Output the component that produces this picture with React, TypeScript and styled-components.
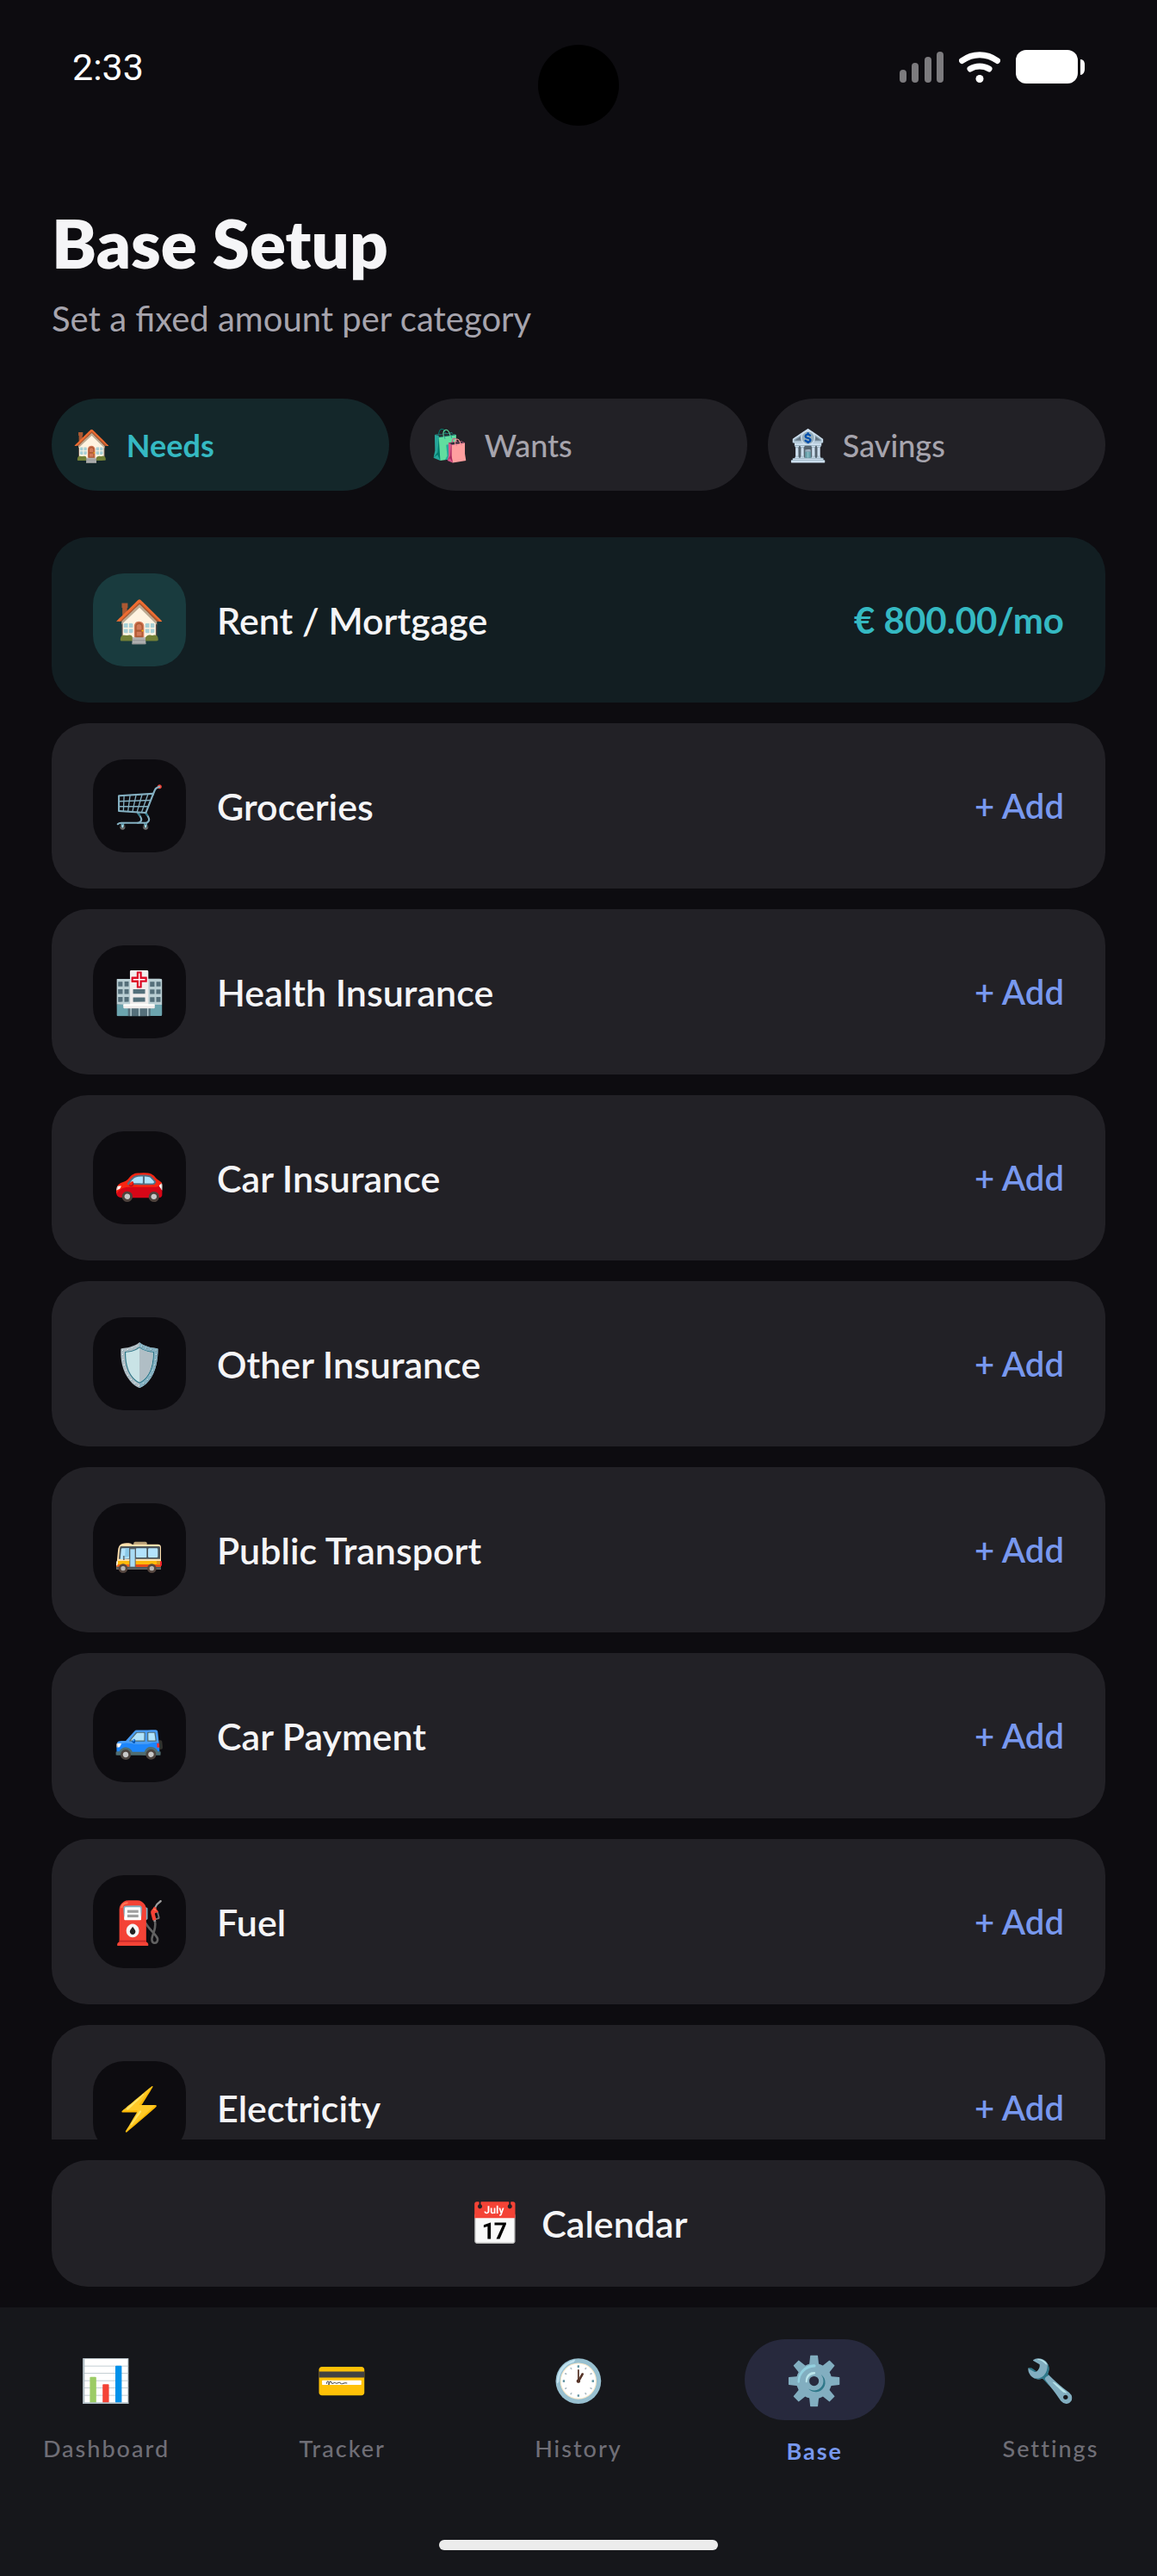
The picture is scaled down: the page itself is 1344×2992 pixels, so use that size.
import { useState } from 'react';
import styled, { createGlobalStyle } from 'styled-components';

type Category = {
  icon: React.ReactNode;
  name: string;
  amount?: string;
};

const BusIcon: React.FC = () => (
  <svg width="54" height="54" viewBox="105 129 162 162" aria-hidden="true">
    <rect x="166" y="182" width="46" height="14" rx="5" fill="#b8a077" />
    <path
      d="M126 189c10-3 20-2 30-1l4 3h90c8 0 11 4 11 11v76H106v-12l5-52c1-14 6-22 15-25z"
      fill="#ffe0ad"
    />
    <path d="M111 249h150v20H107z" fill="#fdb90b" />
    <path d="M107 261h154v9H106z" fill="#f2641c" />
    <path d="M106 269h155v9H106z" fill="#4f5a60" />
    <path d="M172 262h89v8h-89z" fill="#e64a19" />
    <path d="M122 198h131c4 0 5 2 5 5v39H114l3-34c1-7 2-10 5-10z" fill="#4a5459" />
    <path d="M126 205h24v36l-31 3 3-32c0-4 1-7 4-7z" fill="#b3e3fc" />
    <path d="M137 205h13v28l-15 4z" fill="#8bc9e8" />
    <rect x="174" y="205" width="37" height="32" rx="2" fill="#b3e3fc" />
    <rect x="216" y="205" width="34" height="32" rx="4" fill="#b3e3fc" />
    <rect x="151" y="205" width="22" height="66" fill="#5f6669" />
    <rect x="154" y="208" width="16" height="61" fill="#a9dcf5" />
    <path d="M129 231h5v15h-5z" fill="#66757c" />
    <path d="M246 250h13v3h-13zM246 256h13v3h-13z" fill="#b9772b" />
    <rect x="258" y="250" width="6" height="16" rx="2" fill="#f11f2d" />
    <path d="M106 250l5 1-2 14h-4z" fill="#fff7e6" />
    <g fill="#55463f">
      <circle cx="129" cy="275" r="16" />
      <circle cx="229" cy="275" r="16" />
    </g>
    <g fill="#b5b5b5">
      <circle cx="129" cy="275" r="8" />
      <circle cx="229" cy="275" r="8" />
    </g>
  </svg>
);

const tabs = [
  { icon: '🏠', name: 'Needs' },
  { icon: '🛍️', name: 'Wants' },
  { icon: '🏦', name: 'Savings' },
];

const categories: Category[] = [
  { icon: '🏠', name: 'Rent / Mortgage', amount: '€ 800.00/mo' },
  { icon: '🛒', name: 'Groceries' },
  { icon: '🏥', name: 'Health Insurance' },
  { icon: '🚗', name: 'Car Insurance' },
  { icon: '🛡️', name: 'Other Insurance' },
  { icon: <BusIcon />, name: 'Public Transport' },
  { icon: '🚙', name: 'Car Payment' },
  { icon: '⛽', name: 'Fuel' },
  { icon: '⚡', name: 'Electricity' },
];

const pages = [
  { icon: '📊', name: 'Dashboard' },
  { icon: '💳', name: 'Tracker' },
  { icon: '🕐', name: 'History' },
  { icon: '⚙️', name: 'Base' },
  { icon: '🔧', name: 'Settings' },
];

const StatusIcons: React.FC = () => (
  <Indicators>
    <svg width="51" height="36" viewBox="0 0 51 36" fill="#7c7b7e">
      <rect x="0" y="21" width="8" height="15" rx="4" />
      <rect x="14" y="13" width="8" height="23" rx="4" />
      <rect x="29" y="6" width="8" height="30" rx="4" />
      <rect x="43" y="0" width="8" height="36" rx="4" />
    </svg>
    <svg width="48" height="36" viewBox="0 0 48 36" fill="none">
      <g stroke="#fff" strokeWidth="7" strokeLinecap="round">
        <path d="M3.5 10.5C16 1.4 32 1.4 44.5 10.5" />
        <path d="M13 20C19.5 16 28.5 16 35 20" />
      </g>
      <circle cx="24" cy="31.5" r="4.5" fill="#fff" />
    </svg>
    <svg width="80" height="40" viewBox="0 0 80 40" fill="#fff">
      <rect width="72" height="39" rx="12" />
      <path d="M75 11c3 0 5 2 5 6v5c0 4-2 7-5 7z" />
    </svg>
  </Indicators>
);

const CategoryRow: React.FC<{ data: Category }> = ({ data }) => {
  const filled = Boolean(data.amount);
  return (
    <Row $filled={filled}>
      <RowIcon $filled={filled}>{data.icon}</RowIcon>
      <RowName>{data.name}</RowName>
      <RowAction type="button" $filled={filled}>
        {data.amount ?? '+ Add'}
      </RowAction>
    </Row>
  );
};

const App: React.FC = () => {
  const [tab, setTab] = useState('Needs');

  return (
    <Screen>
      <GlobalStyle />
      <StatusBar>
        <Clock>2:33</Clock>
        <Camera />
        <StatusIcons />
      </StatusBar>
      <Header>
        <Title>Base Setup</Title>
        <Subtitle>Set a fixed amount per category</Subtitle>
      </Header>
      <Tabs>
        {tabs.map(({ icon, name }) => (
          <Tab
            key={name}
            type="button"
            aria-pressed={tab === name}
            $active={tab === name}
            onClick={() => setTab(name)}
          >
            <TabIcon>{icon}</TabIcon>
            {name}
          </Tab>
        ))}
      </Tabs>
      <List>
        {categories.map((category) => (
          <CategoryRow key={category.name} data={category} />
        ))}
      </List>
      <CalendarButton type="button">
        <CalendarIcon>📅</CalendarIcon>
        Calendar
      </CalendarButton>
      <BottomBar>
        <Nav>
          {pages.map(({ icon, name }) => (
            <NavLink key={name} href={`#${name.toLowerCase()}`} $active={name === 'Base'}>
              <NavIcon $active={name === 'Base'}>{icon}</NavIcon>
              {name}
            </NavLink>
          ))}
        </Nav>
        <HomeIndicator />
      </BottomBar>
    </Screen>
  );
};

const GlobalStyle = createGlobalStyle`
  * {
    box-sizing: border-box;
  }
  body {
    margin: 0;
    background: #0d0c10;
  }
  button {
    border: 0;
    padding: 0;
    background: none;
    font-family: inherit;
    cursor: pointer;
  }
`;

const Screen = styled.main`
  display: flex;
  flex-direction: column;
  height: 100vh;
  overflow: hidden;
  background: #0d0c10;
  color: #f5f5f7;
  font-family: Lato, 'Noto Color Emoji', sans-serif;
`;

const StatusBar = styled.div`
  position: relative;
  display: flex;
  flex-shrink: 0;
  align-items: center;
  justify-content: space-between;
  height: 156px;
  padding: 0 84px;
`;

const Clock = styled.time`
  color: #fff;
  font-family: Roboto, sans-serif;
  font-size: 43px;
`;

const Camera = styled.div`
  position: absolute;
  top: 52px;
  left: 50%;
  width: 94px;
  height: 94px;
  margin-left: -47px;
  border-radius: 50%;
  background: #000;
`;

const Indicators = styled.div`
  display: flex;
  align-items: center;
  gap: 18px;
`;

const Header = styled.header`
  padding: 78px 60px 0;
`;

const Title = styled.h1`
  margin: 0;
  font-size: 78px;
  font-weight: 800;
  line-height: 96px;
`;

const Subtitle = styled.p`
  margin: 16px 0 0;
  color: #a6a4ad;
  font-size: 40px;
  line-height: 48px;
`;

const Tabs = styled.div`
  display: grid;
  grid-template-columns: repeat(3, 1fr);
  gap: 24px;
  padding: 69px 60px 54px;
`;

const Tab = styled.button<{ $active: boolean }>`
  display: flex;
  align-items: center;
  gap: 18px;
  height: 107px;
  padding: 0 24px;
  border-radius: 54px;
  background: ${({ $active }) => ($active ? '#14272a' : '#222126')};
  color: ${({ $active }) => ($active ? '#35b9c2' : '#a6a4ad')};
  font-size: 36px;
  font-weight: ${({ $active }) => ($active ? 700 : 500)};
`;

const TabIcon = styled.span`
  font-size: 36px;
`;

const List = styled.ul`
  display: flex;
  flex: 1;
  flex-direction: column;
  gap: 24px;
  min-height: 0;
  margin: 0 60px 24px;
  padding: 0;
  overflow: hidden;
  list-style: none;
`;

const Row = styled.li<{ $filled: boolean }>`
  display: flex;
  flex-shrink: 0;
  align-items: center;
  gap: 36px;
  padding: 42px 48px;
  border-radius: 42px;
  background: ${({ $filled }) => ($filled ? '#121e22' : '#222126')};
`;

const RowIcon = styled.span<{ $filled: boolean }>`
  display: flex;
  align-items: center;
  justify-content: center;
  width: 108px;
  height: 108px;
  border-radius: 36px;
  background: ${({ $filled }) => ($filled ? '#193b3e' : '#0d0c10')};
  font-size: 48px;
`;

const RowName = styled.span`
  flex: 1;
  font-size: 43px;
  font-weight: 600;
`;

const RowAction = styled.button<{ $filled: boolean }>`
  color: ${({ $filled }) => ($filled ? '#35b9c2' : '#7898ee')};
  font-size: ${({ $filled }) => ($filled ? 42 : 40)}px;
  font-weight: ${({ $filled }) => ($filled ? 700 : 600)};
`;

const CalendarButton = styled.button`
  display: flex;
  flex-shrink: 0;
  align-items: center;
  justify-content: center;
  gap: 24px;
  height: 147px;
  margin: 0 60px 24px;
  border-radius: 42px;
  background: #222126;
  color: #f5f5f7;
  font-size: 43px;
  font-weight: 600;
`;

const CalendarIcon = styled.span`
  font-size: 48px;
`;

const BottomBar = styled.footer`
  display: flex;
  flex-shrink: 0;
  flex-direction: column;
  align-items: center;
  padding: 37px 0 30px;
  background: #16171b;
`;

const Nav = styled.nav`
  display: flex;
  align-items: center;
  align-self: stretch;
  justify-content: space-between;
  padding: 0 42px;
`;

const NavLink = styled.a<{ $active: boolean }>`
  display: flex;
  flex-direction: column;
  align-items: center;
  gap: 18px;
  width: 163px;
  color: ${({ $active }) => ($active ? '#7898ee' : '#6f6e76')};
  font-size: 27px;
  font-weight: ${({ $active }) => ($active ? 700 : 500)};
  letter-spacing: 2px;
  line-height: 36px;
  text-decoration: none;
`;

const NavIcon = styled.span<{ $active: boolean }>`
  display: flex;
  align-items: center;
  justify-content: center;
  width: 100%;
  height: ${({ $active }) => ($active ? 94 : 88)}px;
  border-radius: 47px;
  background: ${({ $active }) => ($active ? '#27293d' : 'transparent')};
  font-size: ${({ $active }) => ($active ? 54 : 48)}px;
  letter-spacing: 0;
`;

const HomeIndicator = styled.div`
  width: 324px;
  height: 12px;
  margin-top: 85px;
  border-radius: 6px;
  background: #ececec;
`;

export default App;
